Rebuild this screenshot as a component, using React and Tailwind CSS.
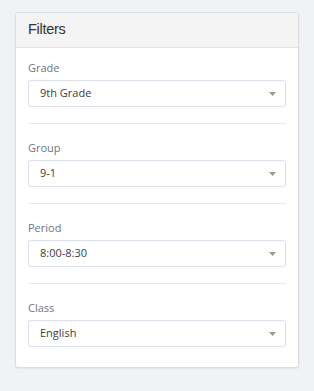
import React from 'react';

const filters = [
  { label: 'Grade', value: '9th Grade' },
  { label: 'Group', value: '9-1' },
  { label: 'Period', value: '8:00-8:30' },
  { label: 'Class', value: 'English' },
];

const SelectBox = ({ value }) => (
  <div className="flex h-[27px] items-center justify-between rounded-[3px] border border-[#dde0ea] bg-white pl-[11px] pr-[9px] font-['Open_Sans',sans-serif] text-[11px] text-[#3d3d3d]">
    <span>{value}</span>
    <svg width="7" height="4" viewBox="0 0 7 4" className="text-[#9a9a9a]">
      <path d="M0 0h7L3.5 4z" fill="currentColor" />
    </svg>
  </div>
);

const App = () => {
  return (
    <div className="min-h-[391px] w-full bg-[#f1f2f6] px-[15px] pt-3 font-['Liberation_Sans',Arial,sans-serif]">
      <div className="overflow-hidden rounded-[3px] border border-[#dcdde0] bg-white shadow-[0_1px_2px_rgba(0,0,0,0.06)]">
        {/* header */}
        <div className="flex h-[35px] items-center border-b border-[#e2e2e4] bg-[#f4f4f4] px-3">
          <h2 className="text-[14.5px] tracking-[-0.3px] text-[#333]">Filters</h2>
        </div>

        {/* body */}
        <div className="px-3 pt-3 pb-5">
          {filters.map((f, i) => (
            <div key={f.label}>
              {i > 0 && <div className="my-4 h-px bg-[#e8e9ee]" />}
              <label className="mb-1 block font-['Open_Sans',sans-serif] text-[11px] leading-4 text-[#6c7588]">{f.label}</label>
              <SelectBox value={f.value} />
            </div>
          ))}
        </div>
      </div>
    </div>
  );
};

export default App;
